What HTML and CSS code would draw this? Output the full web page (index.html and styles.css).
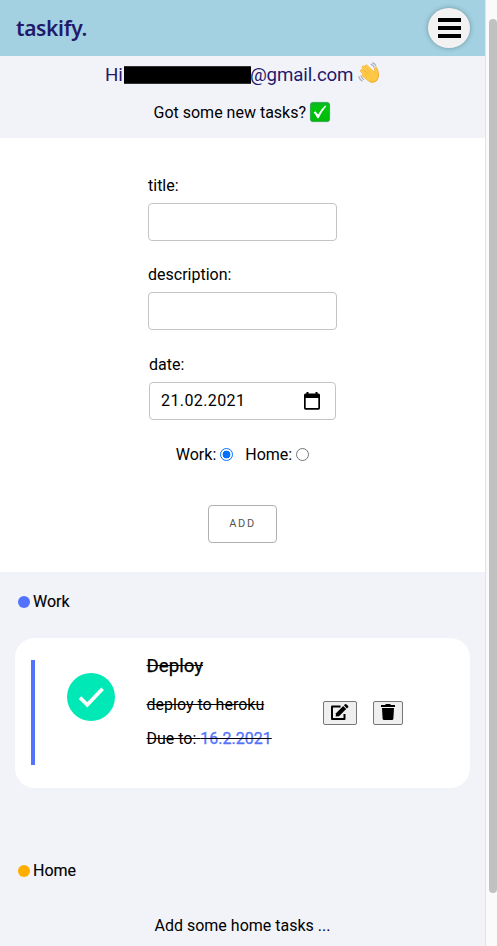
FILE: index.html
```
<!DOCTYPE html>
<html lang="en">
<head>
<meta charset="utf-8">
<title>taskify.</title>
<link rel="stylesheet" href="styles.css">
</head>
<body>
<div class="window">
  <div class="app">
    <header class="bar">
      <div class="logo">taskify.</div>
      <button class="menu" aria-label="Menu"><span></span><span></span><span></span></button>
    </header>
    <section class="intro">
      <h3 class="hello"><span>Hi</span><span class="redacted"></span><span class="mail">@gmail.com</span>
        <svg class="wave" viewBox="0 0 22 22" width="22" height="22">
          <g fill="none" stroke="#a9afb8" stroke-width="1.2" stroke-linecap="round">
            <path d="M13 2.4Q15 3 16 5M14.6.9Q17 1.7 18 4M.9 14.6Q1.6 17.5 4.2 19M3 13.8Q3.6 16 5.6 17.4"/>
          </g>
          <path d="M8.4 4.3L15 11M5.3 5.2L12.5 12.8M3.8 8.8L11 15.2M5.4 12.9L11 17.6" stroke="#eda83a" stroke-width="3.3" stroke-linecap="round"/>
          <path d="M10 7L16 11.3Q16.6 9 16.2 7Q16.2 4.8 17.8 4.9Q19.6 5.2 20.4 9Q22 14.5 19.4 18.4Q16.2 22 12 20.3Q9 19 6.5 15Z" fill="#f0ac34"/>
          <path d="M8.5 4.3L15 11M5.4 5.2L12.5 12.8M3.9 8.7L11 15.2M5.5 12.7L11 17.4" stroke="#ffcb4a" stroke-width="2.7" stroke-linecap="round"/>
          <path d="M9 7L16.4 12.3Q17.4 9.5 16.8 6.8Q16.9 5.2 18.1 5.7Q19.2 6.5 19.7 9.3Q21 14.5 18.6 17.8Q15.7 20.9 12 19.1Q8.5 17 6.5 13.5Z" fill="#ffc844"/>
          <path d="M9.3 7.2L12.5 10.4M7 9L10.4 12.5M6.5 12.2L9.2 14.6" stroke="#eda83a" stroke-width=".5"/>
        </svg>
      </h3>
      <p class="sub"><span class="subtext">Got some new tasks?</span>
        <svg class="tick" viewBox="0 0 20 20" width="20" height="20">
          <defs><linearGradient id="g" x1="0" y1="0" x2="0" y2="1"><stop offset="0" stop-color="#0fb32b"/><stop offset=".3" stop-color="#00c70c"/><stop offset="1" stop-color="#00b80a"/></linearGradient></defs>
          <rect x=".4" y=".4" width="19.2" height="19.2" rx="2.6" fill="url(#g)" stroke="#23a043" stroke-width=".8"/>
          <path d="M3.6 10.6L5.4 9.2L8 12.5Q11.5 6.5 15.2 3.4L16.3 4.2Q12 9 8.6 16.2H7.3Q6 13 3.6 10.6Z" fill="#fff"/>
        </svg>
      </p>
    </section>
    <form class="form">
      <div class="field"><label>title:</label><div class="input"></div></div>
      <div class="field"><label>description:</label><div class="input"></div></div>
      <div class="field date"><label>date:</label>
        <div class="input"><span class="value">21.02.2021</span>
          <svg viewBox="0 0 18 18" width="18" height="18"><path fill-rule="evenodd" d="M3.5 0H5.5V1.5H12.5V0H14.5V1.5H15.5Q17 1.5 17 3V16Q17 17.7 15.5 17.7H2.5Q1 17.7 1 16V3Q1 1.5 2.5 1.5H3.5ZM2.7 6V16H15.3V6Z"/></svg>
        </div>
      </div>
      <div class="radios">
        <label>Work:</label><span class="radio on"></span>
        <label class="second">Home:</label><span class="radio"></span>
      </div>
      <button type="button" class="add">ADD</button>
    </form>
    <main class="lists">
      <h4 class="group work"><i></i><span>Work</span></h4>
      <article class="card">
        <div class="stripe"></div>
        <svg class="done" viewBox="0 0 48 48" width="48" height="48"><circle cx="24" cy="24" r="24" fill="#00e8b5"/><path d="M13 24.6L20.3 31.8L35.6 15.8" fill="none" stroke="#fff" stroke-width="3.7"/></svg>
        <div class="info">
          <h3>Deploy</h3>
          <p class="desc">deploy to heroku</p>
          <p class="due">Due to: <span>16.2.2021</span></p>
        </div>
        <div class="actions">
          <button class="edit" aria-label="Edit"><svg viewBox="0 0 18 16" width="18" height="16"><path d="M9.5 2.5H1V15H13.5V10" fill="none" stroke="#000" stroke-width="2" stroke-linejoin="round"/><path d="M5 9.2L12.2 2L15.2 5L8 12.2L4.7 12.6Z"/><path d="M12.9 1.3L14 .3Q14.8-.3 15.6.4L17.1 1.9Q17.8 2.7 17 3.5L15.9 4.4Z"/></svg></button>
          <button class="trash" aria-label="Delete"><svg viewBox="0 0 14 16" width="14" height="16"><path d="M0 1H4L5 0H9L10 1H14V3H0ZM1 4H13L12.4 14.5Q12.3 16 10.9 16H3.1Q1.7 16 1.6 14.5Z"/></svg></button>
        </div>
      </article>
      <h4 class="group home"><i></i><span>Home</span></h4>
      <p class="empty"><span>Add some home tasks ...</span></p>
    </main>
  </div>
  <div class="track"><div class="thumb"></div></div>
</div>
</body>
</html>
```
FILE: styles.css
```
* { box-sizing: border-box; }
body { margin: 0; font: 16px/20px Roboto, sans-serif; color: #000; }
h3, h4, p { margin: 0; font-weight: 400; }
button { padding: 0; font-family: inherit; }
svg { display: block; flex: none; overflow: visible; }
.window { display: flex; width: 497px; height: 946px; overflow: hidden; }
.app { width: 485px; background: #f2f3f9; }
.track { width: 12px; background: #fafafa; border-left: 1px solid #e3e3e6; padding: 19px 0 0 3px; overflow: hidden; }
.thumb { width: 8px; height: 874px; border-radius: 4px; background: #c1c1c1; }

.bar { height: 56px; background: #a3d1e1; display: flex; justify-content: space-between; align-items: center; padding: 0 15px 0 16px; }
.logo { font: 600 21px/28px "Noto Sans", sans-serif; letter-spacing: -.35px; color: #1f1a6b; }
.menu { width: 42px; height: 40px; border: 0; border-radius: 50%; background: #f2f2f2; box-shadow: 0 0 5px rgba(0, 0, 0, .3); display: flex; flex-direction: column; align-items: center; justify-content: center; gap: 4px; }
.menu span { width: 23px; height: 4px; background: #000; }

.intro { height: 82px; }
.hello { display: flex; align-items: center; height: 37px; padding-left: 105px; font-size: 18.72px; color: #1f1a6b; }
.redacted { width: 127px; height: 18px; margin-left: 1px; background: #000; border: 1px solid #333; border-width: 1px 0; }
.mail { margin-left: -1px; letter-spacing: -.13px; }
.wave { margin: -3px 0 0 5px; }
.sub { display: flex; align-items: center; height: 38px; padding-left: 153.5px; }
.subtext { padding-top: 1px; }
.tick { margin: -1px 0 0 4px; }

.form { height: 434px; background: #fff; display: flex; flex-direction: column; align-items: center; padding-top: 38px; }
.field { width: 189px; height: 89px; }
.field label { display: block; height: 27px; }
.date { width: 187px; height: 90px; padding-top: 1px; }
.input { height: 38px; border: 1px solid #c4c4c4; border-radius: 4px; display: flex; align-items: center; justify-content: space-between; padding: 0 14px 0 11px; }
.value { letter-spacing: .4px; }
.radios { display: flex; align-items: center; height: 20px; margin-top: 1px; }
.radio { width: 13px; height: 13px; margin: -2px 0 0 4px; border: 1px solid #767676; border-radius: 50%; }
.radio.on { border-color: #0075ff; background: radial-gradient(circle, #0070ff 3.6px, #fff 4.2px); }
.second { margin-left: 12px; }
.add { width: 69px; height: 38px; margin-top: 40px; padding-bottom: 2px; border: 1px solid #b0b0b0; border-radius: 4px; background: #fff; color: #555; font-size: 11px; letter-spacing: 1.6px; }

.group { display: flex; align-items: center; height: 20px; margin-left: 18px; font-size: 16px; }
.group i { width: 12px; height: 12px; margin: -1px 3px 0 0; border-radius: 50%; background: #5372fd; }
.work { margin-top: 20px; }
.home { margin-top: 73px; }
.home i { background: #ffae00; }
.group span { -webkit-text-stroke: .15px #000; }
.card { display: flex; width: 455px; height: 150px; margin: 26px 0 0 15px; border-radius: 20px; background: #fff; }
.stripe { width: 4px; height: 105px; margin: 22px 0 0 16px; background: #5372fd; }
.done { margin: 35px 0 0 32px; }
.info { width: 145px; margin: 18px 0 0 31.5px; white-space: nowrap; text-decoration: line-through; }
.info h3 { height: 20px; font-size: 18.72px; -webkit-text-stroke: .25px #000; }
.desc { margin-top: 19px; }
.due { margin-top: 14px; }
.due span { color: #5372fd; -webkit-text-stroke: .3px #5372fd; }
.actions { display: flex; gap: 16px; margin: 63px 0 0 31.5px; }
.actions button { height: 24px; border: 1px solid #767676; border-radius: 2px; background: #efefef; display: flex; justify-content: center; padding-top: 2px; }
.actions .edit { width: 34px; }
.actions .trash { width: 30px; }
.empty { margin: 35px 0 0 154.5px; }
```
